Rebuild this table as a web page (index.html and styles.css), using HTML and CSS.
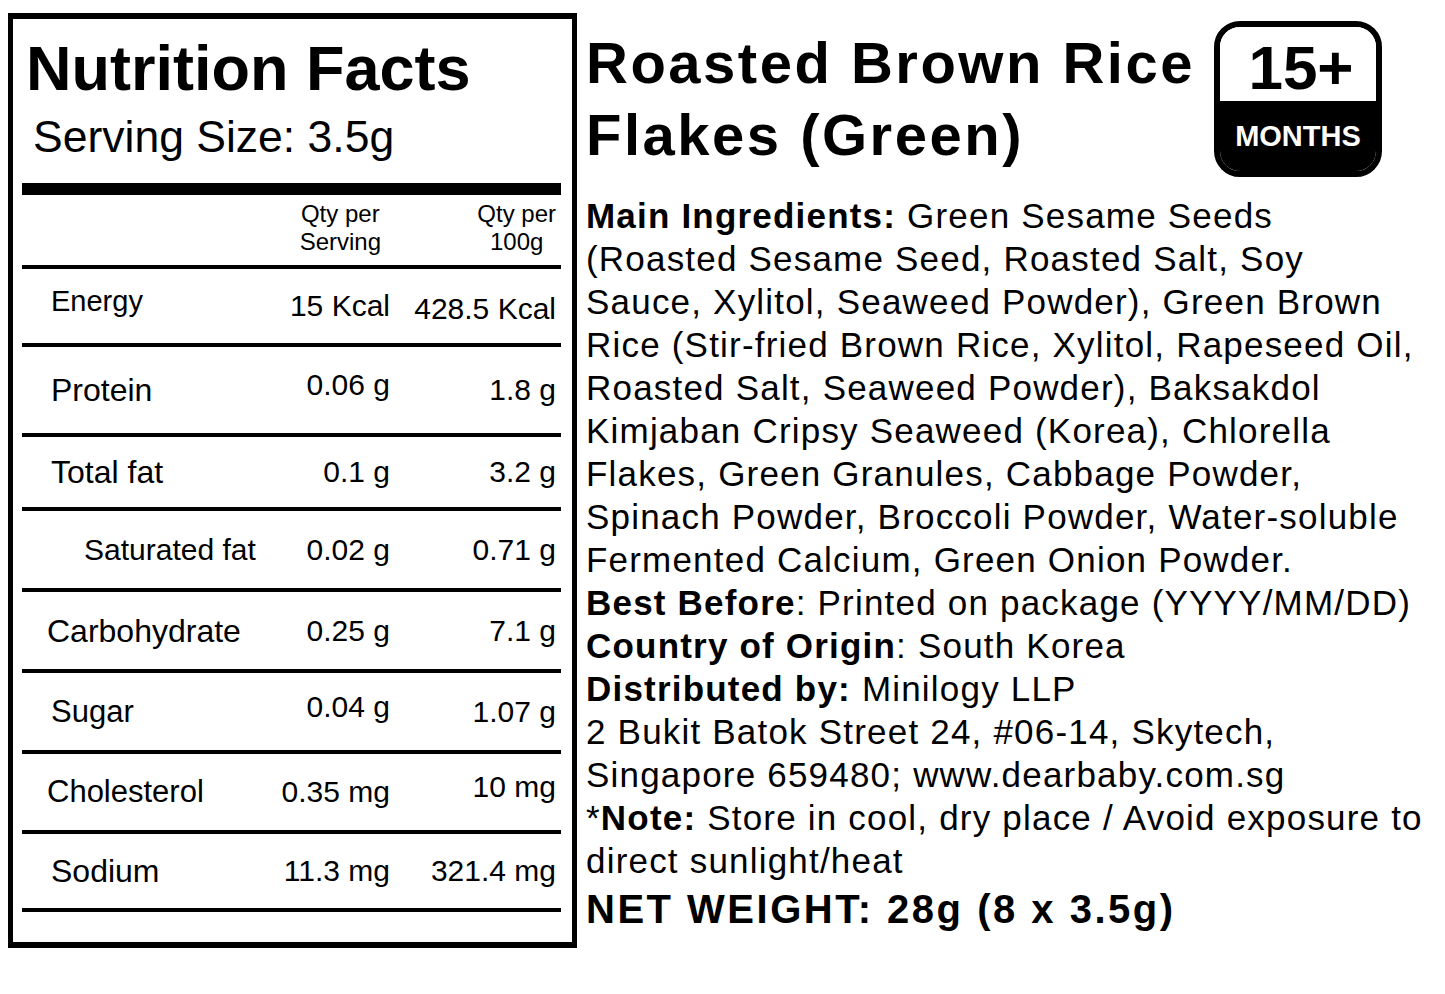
FILE: index.html
```html
<!DOCTYPE html>
<html lang="en">
<head>
<meta charset="utf-8">
<title>Roasted Brown Rice Flakes (Green) - Nutrition Facts</title>
<link rel="stylesheet" href="styles.css">
</head>
<body>
<div class="page">
  <section class="nf">
    <h1 class="nf-title">Nutrition Facts</h1>
    <div class="nf-serving">Serving Size: 3.5g</div>
    <div class="nf-bar"></div>
    <div class="nf-head">
      <div></div>
      <div class="nf-hcell nf-hcell--serv">Qty per<br>Serving</div>
      <div class="nf-hcell nf-hcell--100">Qty per<br>100g</div>
    </div>
    <div class="nf-row h78">
      <div class="nf-label nf-label--sm nf-label--up">Energy</div>
      <div class="nf-val">15 Kcal</div>
      <div class="nf-val nf-val--last nf-val--down">428.5 Kcal</div>
    </div>
    <div class="nf-row h90">
      <div class="nf-label">Protein</div>
      <div class="nf-val nf-val--up">0.06 g</div>
      <div class="nf-val nf-val--last">1.8 g</div>
    </div>
    <div class="nf-row h74">
      <div class="nf-label">Total fat</div>
      <div class="nf-val">0.1 g</div>
      <div class="nf-val nf-val--last">3.2 g</div>
    </div>
    <div class="nf-row h81">
      <div class="nf-label nf-label--sub">Saturated fat</div>
      <div class="nf-val">0.02 g</div>
      <div class="nf-val nf-val--last">0.71 g</div>
    </div>
    <div class="nf-row h81">
      <div class="nf-label nf-label--wide">Carbohydrate</div>
      <div class="nf-val">0.25 g</div>
      <div class="nf-val nf-val--last">7.1 g</div>
    </div>
    <div class="nf-row h81">
      <div class="nf-label nf-label--mid">Sugar</div>
      <div class="nf-val nf-val--up">0.04 g</div>
      <div class="nf-val nf-val--last">1.07 g</div>
    </div>
    <div class="nf-row h80">
      <div class="nf-label nf-label--wide nf-label--mid">Cholesterol</div>
      <div class="nf-val">0.35 mg</div>
      <div class="nf-val nf-val--last nf-val--up">10 mg</div>
    </div>
    <div class="nf-row h78">
      <div class="nf-label">Sodium</div>
      <div class="nf-val">11.3 mg</div>
      <div class="nf-val nf-val--last">321.4 mg</div>
    </div>
  </section>

  <section class="info">
    <div class="info-head">
      <h2 class="info-title">Roasted Brown Rice<br>Flakes (Green)</h2>
      <div class="badge">
        <div class="badge-top">15+</div>
        <div class="badge-bottom">MONTHS</div>
      </div>
    </div>
    <p class="info-text"><b>Main Ingredients:</b> Green Sesame Seeds<br>(Roasted Sesame Seed, Roasted Salt, Soy<br>Sauce, Xylitol, Seaweed Powder), Green Brown<br>Rice (Stir-fried Brown Rice, Xylitol, Rapeseed Oil,<br>Roasted Salt, Seaweed Powder), Baksakdol<br>Kimjaban Cripsy Seaweed (Korea), Chlorella<br>Flakes, Green Granules, Cabbage Powder,<br>Spinach Powder, Broccoli Powder, Water-soluble<br>Fermented Calcium, Green Onion Powder.<br><b>Best Before</b>: Printed on package (YYYY/MM/DD)<br><b>Country of Origin</b>: South Korea<br><b>Distributed by:</b> Minilogy LLP<br>2 Bukit Batok Street 24, #06-14, Skytech,<br>Singapore 659480; www.dearbaby.com.sg<br>*<b>Note:</b> Store in cool, dry place / Avoid exposure to<br>direct sunlight/heat</p>
    <p class="info-weight">NET WEIGHT: 28g (8 x 3.5g)</p>
  </section>
</div>
</body>
</html>
```
FILE: styles.css
```css
* {
  box-sizing: border-box;
  margin: 0;
  padding: 0;
}

body {
  margin: 0;
  background: #fff;
  color: #000;
  font-family: "Liberation Sans", Arial, sans-serif;
}

.page {
  display: flex;
  align-items: flex-start;
  gap: 9px;
  padding: 13px 0 0 8px;
}

/* ---------- Nutrition facts panel ---------- */
.nf {
  width: 569px;
  height: 935px;
  flex: none;
  border: solid #000;
  border-width: 6px 5px;
  padding: 14px 11px 0 9px;
}

.nf-title {
  font-size: 63px;
  font-weight: 700;
  line-height: 71px;
  padding-left: 4px;
}

.nf-serving {
  margin-top: 8px;
  padding-left: 11px;
  font-size: 44.5px;
  line-height: 50px;
}

.nf-bar {
  margin-top: 21px;
  height: 12px;
  background: #000;
}

.nf-head {
  display: grid;
  grid-template-columns: 1fr 125px 171px;
  align-items: start;
  height: 74px;
  padding-top: 5px;
  border-bottom: 4px solid #000;
  font-size: 24px;
  line-height: 28px;
}

.nf-hcell {
  justify-self: end;
  text-align: center;
}

.nf-hcell--serv {
  margin-right: 9px;
}

.nf-hcell--100 {
  margin-right: 5px;
}

.nf-row {
  display: grid;
  grid-template-columns: 1fr 125px 171px;
  align-items: center;
  border-bottom: 4px solid #000;
  font-size: 30px;
  line-height: 34px;
  white-space: nowrap;
}

.h74 { height: 74px; }
.h78 { height: 78px; }
.h80 { height: 80px; }
.h81 { height: 81px; }
.h90 { height: 90px; }

.nf-label {
  padding-left: 29px;
  font-size: 32px;
}

.nf-label--sm {
  font-size: 29px;
}

.nf-label--mid {
  font-size: 31px;
}

.nf-label--wide {
  padding-left: 25px;
}

.nf-label--sub {
  padding-left: 62px;
  font-size: 30px;
}

.nf-label--up,
.nf-val--up {
  margin-bottom: 10px;
}

.nf-val--down {
  margin-top: 6px;
}

.nf-val {
  text-align: right;
}

.nf-val--last {
  padding-right: 5px;
}

/* ---------- Product info ---------- */
.info {
  width: 850px;
  flex: none;
}

.info-head {
  display: flex;
  justify-content: space-between;
  align-items: flex-start;
  width: 796px;
}

.info-title {
  margin-top: 14px;
  font-size: 58px;
  font-weight: 700;
  line-height: 72px;
  letter-spacing: 2.5px;
  white-space: nowrap;
}

.badge {
  margin-top: 8px;
  width: 168px;
  height: 156px;
  border: 6px solid #000;
  border-radius: 26px;
  overflow: hidden;
  display: flex;
  flex-direction: column;
  font-weight: 700;
  text-align: center;
}

.badge-top {
  height: 74px;
  padding-top: 8px;
  padding-left: 6px;
  font-size: 62px;
  line-height: 66px;
  background: #fff;
}

.badge-bottom {
  flex: 1;
  display: flex;
  align-items: center;
  justify-content: center;
  background: #000;
  color: #fff;
  font-size: 29px;
  line-height: 34px;
}

.info-text {
  margin-top: 17px;
  font-size: 35px;
  line-height: 43px;
  letter-spacing: 1.2px;
  white-space: nowrap;
}

.info-text b {
  font-weight: 700;
}

.info-weight {
  margin-top: 4px;
  font-size: 40px;
  font-weight: 700;
  line-height: 46px;
  letter-spacing: 2.5px;
  white-space: nowrap;
}
```
